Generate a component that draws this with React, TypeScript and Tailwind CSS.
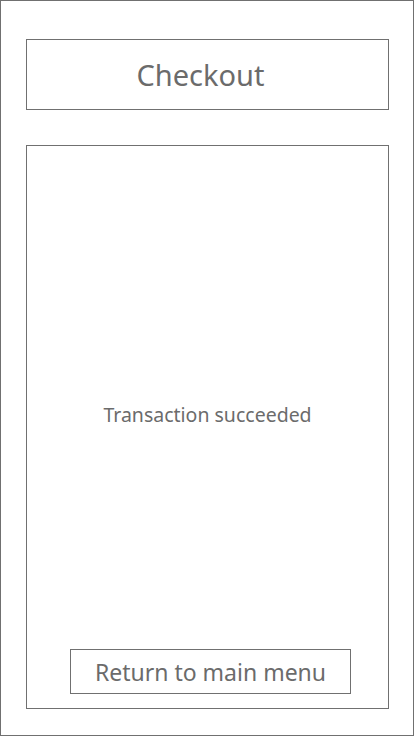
export default function App() {
  return (
    <div
      className="w-[414px] h-[736px] border border-[#707070] bg-white text-[#6b6b6b] flex flex-col"
      style={{ fontFamily: '"Noto Sans", "Open Sans", sans-serif' }}
    >
      {/* Header */}
      <div className="mt-[38px] ml-[25px] w-[363px] h-[71px] border border-[#707070] flex items-center justify-center pr-[14px]">
        <h1 className="text-[29px] leading-none">Checkout</h1>
      </div>

      {/* Body */}
      <div className="mt-[35px] ml-[25px] w-[363px] h-[564px] border border-[#707070] flex flex-col">
        <div className="flex-1 flex items-center justify-center pt-[34px]">
          <p className="text-[19.5px]">Transaction succeeded</p>
        </div>
        <button className="ml-[43px] mb-[14px] w-[281px] h-[45px] border border-[#707070] text-[23px] text-[#6b6b6b] flex items-center justify-center pt-[2px]">
          Return to main menu
        </button>
      </div>
    </div>
  );
}
